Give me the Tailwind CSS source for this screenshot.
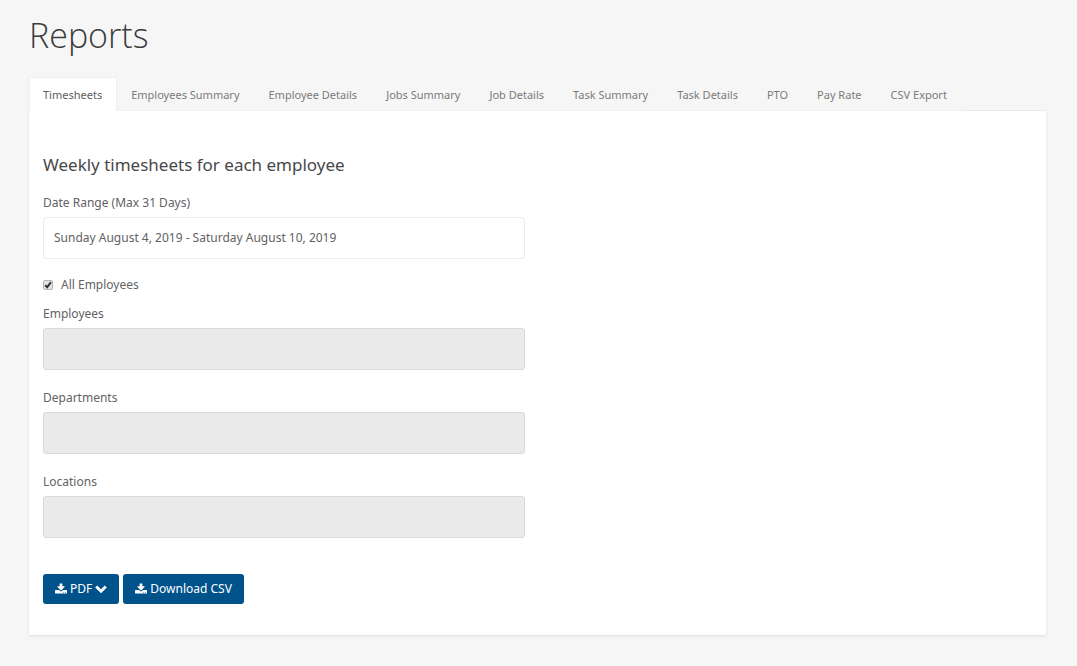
<!DOCTYPE html>
<html lang="en">

<head>
    <meta charset="UTF-8">
    <meta name="viewport" content="width=device-width, initial-scale=1.0">
    <script src="https://cdn.jsdelivr.net/npm/@tailwindcss/browser@4"></script>
    <title>Reports</title>
</head>

<body class="bg-[#f6f6f6] font-['Noto_Sans','Open_Sans',sans-serif] text-[12px] leading-5 text-[#626264]">
    <main class="pl-[29px] pr-[31px] pt-[11px] pb-8">
        <h1 class="font-['Open_Sans','Noto_Sans',sans-serif] text-[34px] leading-12 font-light text-[#3c3c3e]">Reports</h1>

        <!-- Tabs -->
        <nav class="mt-[18px] flex text-[11px] leading-4 text-[#7a7a7a]">
            <a href="#" class="h-[34px] pl-[13px] pr-3.5 pt-[9px] border border-b-0 border-[#eeeeee] bg-white text-[#5c5c5c]">Timesheets</a>
            <a href="#" class="pl-3.5 pr-[15px] pt-2.5">Employees Summary</a>
            <a href="#" class="pl-3.5 pr-[15px] pt-2.5">Employee Details</a>
            <a href="#" class="pl-3.5 pr-[15px] pt-2.5">Jobs Summary</a>
            <a href="#" class="pl-3.5 pr-[15px] pt-2.5">Job Details</a>
            <a href="#" class="pl-3.5 pr-[15px] pt-2.5">Task Summary</a>
            <a href="#" class="pl-3.5 pr-[15px] pt-2.5">Task Details</a>
            <a href="#" class="pl-3.5 pr-[15px] pt-2.5">PTO</a>
            <a href="#" class="pl-3.5 pr-[15px] pt-2.5">Pay Rate</a>
            <a href="#" class="pl-3.5 pr-[15px] pt-2.5">CSV Export</a>
            <span class="grow border-b border-[#e9e9e9]"></span>
        </nav>

        <!-- Timesheets report -->
        <section class="bg-white px-3.5 pt-10 pb-[31px] shadow-[0_1px_3px_rgba(0,0,0,0.1)]">
            <h2 class="text-[17px] leading-7 text-[#48484a]">Weekly timesheets for each employee</h2>
            <form class="w-1/2 pr-[13px]">
                <label for="range" class="block mt-3.5">Date Range (Max 31 Days)</label>
                <input type="text" id="range" value="Sunday August 4, 2019 - Saturday August 10, 2019"
                    class="block mt-1 h-[42px] w-full rounded-[3px] border border-[#ececec] px-2.5 pb-0.5">

                <div class="mt-4 flex items-center gap-2">
                    <span class="relative flex size-2.5">
                        <input type="checkbox" id="all" checked
                            class="peer size-2.5 appearance-none rounded-[2px] border border-[#b5b5b5] bg-[#e4e4e4]">
                        <svg class="pointer-events-none absolute inset-0 hidden size-2.5 peer-checked:block" viewBox="0 0 10 10" fill="none" stroke="#333333" stroke-width="2">
                            <path d="M2.2 5.2 4.2 7.2 8 2.2" />
                        </svg>
                    </span>
                    <label for="all">All Employees</label>
                </div>

                <label for="employees" class="block mt-[9px]">Employees</label>
                <input type="text" id="employees" disabled
                    class="block mt-1 h-[42px] w-full rounded-[3px] border border-[#d9d9d9] bg-[#eaeaea] px-2.5">

                <label for="departments" class="block mt-[18px]">Departments</label>
                <input type="text" id="departments" disabled
                    class="block mt-1 h-[42px] w-full rounded-[3px] border border-[#d9d9d9] bg-[#eaeaea] px-2.5">

                <label for="locations" class="block mt-[18px]">Locations</label>
                <input type="text" id="locations" disabled
                    class="block mt-1 h-[42px] w-full rounded-[3px] border border-[#d9d9d9] bg-[#eaeaea] px-2.5">

                <div class="mt-9 flex gap-1">
                    <button type="button" class="flex h-[30px] items-center gap-[3px] rounded-[3px] bg-[#00528b] px-3 text-white">
                        <svg class="h-3 w-3" viewBox="0 0 1664 1536" fill="currentColor">
                            <path d="M1280 1216q0-26-19-45t-45-19-45 19-19 45 19 45 45 19 45-19 19-45zm256 0q0-26-19-45t-45-19-45 19-19 45 19 45 45 19 45-19 19-45zm128-224v320q0 40-28 68t-68 28H96q-40 0-68-28t-28-68V992q0-40 28-68t68-28h465l135 136q58 56 136 56t136-56l136-136h464q40 0 68 28t28 68zm-325-569q17 41-14 70L877 941q-18 19-45 19t-45-19L339 493q-31-29-14-70 17-39 59-39h256V64q0-26 19-45t45-19h256q26 0 45 19t19 45v320h256q42 0 59 39z" />
                        </svg>
                        PDF
                        <svg class="h-3 w-3" viewBox="0 0 12 12" fill="none" stroke="currentColor" stroke-width="3">
                            <path d="M1.2 3.5 6 8.2l4.8-4.7" />
                        </svg>
                    </button>
                    <button type="button" class="flex h-[30px] items-center gap-[3px] rounded-[3px] bg-[#00528b] px-3 text-white">
                        <svg class="h-3 w-3" viewBox="0 0 1664 1536" fill="currentColor">
                            <path d="M1280 1216q0-26-19-45t-45-19-45 19-19 45 19 45 45 19 45-19 19-45zm256 0q0-26-19-45t-45-19-45 19-19 45 19 45 45 19 45-19 19-45zm128-224v320q0 40-28 68t-68 28H96q-40 0-68-28t-28-68V992q0-40 28-68t68-28h465l135 136q58 56 136 56t136-56l136-136h464q40 0 68 28t28 68zm-325-569q17 41-14 70L877 941q-18 19-45 19t-45-19L339 493q-31-29-14-70 17-39 59-39h256V64q0-26 19-45t45-19h256q26 0 45 19t19 45v320h256q42 0 59 39z" />
                        </svg>
                        Download CSV
                    </button>
                </div>
            </form>
        </section>
    </main>
</body>

</html>
